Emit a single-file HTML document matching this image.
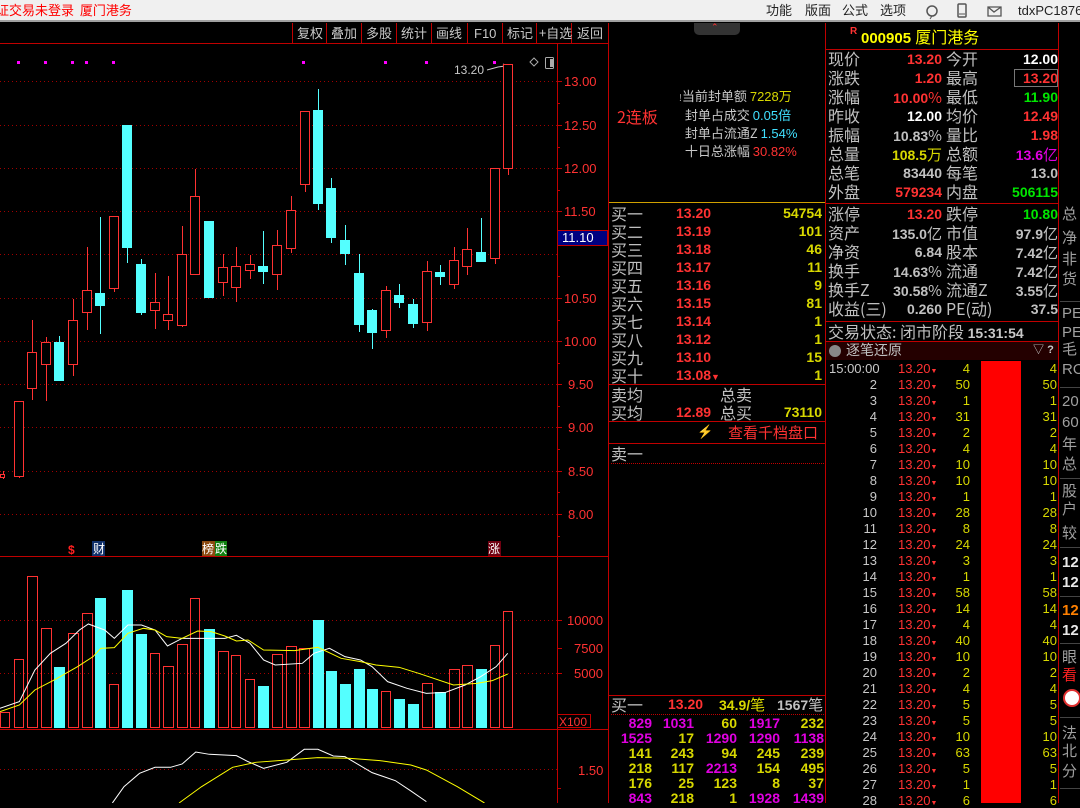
<!DOCTYPE html>
<html><head><meta charset="utf-8"><style>
*{margin:0;padding:0;box-sizing:border-box}
body{width:1080px;height:803px;background:#000;overflow:hidden;position:relative;font-family:"Liberation Sans","Noto Sans CJK SC",sans-serif}
.a{position:absolute;white-space:nowrap;line-height:1}
.cn{font-family:"Noto Sans CJK SC","WenQuanYi Zen Hei",sans-serif}
.n{font-family:"Liberation Sans",sans-serif;font-weight:bold;font-size:14px}
.l{font-size:16px;color:#c0c0c0}
.r{color:#ff3232}.y{color:#d8d800}.g{color:#00e600}.w{color:#fff}.m{color:#e000e0}.c{color:#40e0ff}.gr{color:#c0c0c0}
.hl{position:absolute;height:1px;background:#c00000}
.vl{position:absolute;width:1px;background:#c00000}
</style></head><body>
<!-- top bar -->
<div class="a" style="left:0;top:0;width:1080px;height:22px;background:#f0f0f0;border-bottom:2px solid #a0a0a0"></div>
<div class="a cn" style="left:-4px;top:3px;font-size:13px;color:#f00">证交易未登录&nbsp;&nbsp;厦门港务</div>
<div class="a cn" style="left:766px;top:3px;font-size:13px;color:#222;word-spacing:0">功能</div>
<div class="a cn" style="left:805px;top:3px;font-size:13px;color:#222">版面</div>
<div class="a cn" style="left:842px;top:3px;font-size:13px;color:#222">公式</div>
<div class="a cn" style="left:880px;top:3px;font-size:13px;color:#222">选项</div>
<svg class="a" style="left:922px;top:2px" width="80" height="18"><circle cx="10" cy="9" r="5" fill="none" stroke="#555" stroke-width="1.5"/><path d="M10 14 L8 17" stroke="#555"/><rect x="36" y="2" width="8" height="13" rx="1" fill="none" stroke="#555" stroke-width="1.5"/><line x1="37" y1="12" x2="43" y2="12" stroke="#555"/><path d="M66 5 H79 V14 H66 Z M66 5 L72 10 L79 5" fill="none" stroke="#555" stroke-width="1.3"/></svg>
<div class="a" style="left:1018px;top:4px;font-size:13px;color:#222">tdxPC1876</div>

<!-- left chart -->
<svg class="a" style="left:0;top:23px" width="609" height="780" viewBox="0 23 609 780">
<line x1="0" y1="43.5" x2="608" y2="43.5" stroke="#c00000"/>
<g stroke="#c00000"><line x1="292.5" y1="23" x2="292.5" y2="43"/><line x1="326.5" y1="23" x2="326.5" y2="43"/><line x1="361.5" y1="23" x2="361.5" y2="43"/><line x1="396.5" y1="23" x2="396.5" y2="43"/><line x1="431.5" y1="23" x2="431.5" y2="43"/><line x1="467.5" y1="23" x2="467.5" y2="43"/><line x1="502.5" y1="23" x2="502.5" y2="43"/><line x1="536.5" y1="23" x2="536.5" y2="43"/><line x1="571.5" y1="23" x2="571.5" y2="43"/></g>
<g font-family="Noto Sans CJK SC,sans-serif" font-size="13" fill="#c8c8c8">
<text x="297" y="38">复权</text><text x="331" y="38">叠加</text><text x="366" y="38">多股</text><text x="401" y="38">统计</text><text x="436" y="38">画线</text><text x="474" y="38" font-family="Liberation Sans">F10</text><text x="507" y="38">标记</text><text x="539" y="38">+自选</text><text x="577" y="38">返回</text></g>
<line x1="557.5" y1="44" x2="557.5" y2="803" stroke="#c00000"/>
<line x1="608.5" y1="23" x2="608.5" y2="803" stroke="#c00000"/>
<g stroke="#a00000" stroke-dasharray="1,3">
<line x1="0" y1="81.5" x2="557" y2="81.5"/><line x1="0" y1="125.5" x2="557" y2="125.5"/><line x1="0" y1="168.5" x2="557" y2="168.5"/><line x1="0" y1="211.5" x2="557" y2="211.5"/><line x1="0" y1="254.5" x2="557" y2="254.5"/><line x1="0" y1="298.5" x2="557" y2="298.5"/><line x1="0" y1="341.5" x2="557" y2="341.5"/><line x1="0" y1="384.5" x2="557" y2="384.5"/><line x1="0" y1="427.5" x2="557" y2="427.5"/><line x1="0" y1="471.5" x2="557" y2="471.5"/><line x1="0" y1="514.5" x2="557" y2="514.5"/>
<line x1="0" y1="620.5" x2="557" y2="620.5"/><line x1="0" y1="673.5" x2="557" y2="673.5"/><line x1="0" y1="769.5" x2="557" y2="769.5"/></g>
<g stroke="#c00000"><line x1="557" y1="81.5" x2="562" y2="81.5"/><line x1="557" y1="103.5" x2="560" y2="103.5"/><line x1="557" y1="125.5" x2="562" y2="125.5"/><line x1="557" y1="147.5" x2="560" y2="147.5"/><line x1="557" y1="168.5" x2="562" y2="168.5"/><line x1="557" y1="190.5" x2="560" y2="190.5"/><line x1="557" y1="211.5" x2="562" y2="211.5"/><line x1="557" y1="233.5" x2="560" y2="233.5"/><line x1="557" y1="276.5" x2="560" y2="276.5"/><line x1="557" y1="298.5" x2="562" y2="298.5"/><line x1="557" y1="320.5" x2="560" y2="320.5"/><line x1="557" y1="341.5" x2="562" y2="341.5"/><line x1="557" y1="363.5" x2="560" y2="363.5"/><line x1="557" y1="384.5" x2="562" y2="384.5"/><line x1="557" y1="406.5" x2="560" y2="406.5"/><line x1="557" y1="427.5" x2="562" y2="427.5"/><line x1="557" y1="449.5" x2="560" y2="449.5"/><line x1="557" y1="471.5" x2="562" y2="471.5"/><line x1="557" y1="492.5" x2="560" y2="492.5"/><line x1="557" y1="514.5" x2="562" y2="514.5"/><line x1="557" y1="536.5" x2="560" y2="536.5"/><line x1="557" y1="648.5" x2="562" y2="648.5"/><line x1="557" y1="620.5" x2="562" y2="620.5"/><line x1="557" y1="673.5" x2="562" y2="673.5"/><line x1="557" y1="788.5" x2="561" y2="788.5"/></g>
<g font-family="Liberation Sans" font-size="13" fill="#ff3232">
<text x="564" y="86">13.00</text><text x="564" y="130">12.50</text><text x="564" y="173">12.00</text><text x="564" y="216">11.50</text><text x="564" y="303">10.50</text><text x="564" y="346">10.00</text><text x="568" y="389">9.50</text><text x="568" y="432">9.00</text><text x="568" y="476">8.50</text><text x="568" y="519">8.00</text>
<text x="567" y="625">10000</text><text x="574" y="653">7500</text><text x="574" y="678">5000</text><text x="578" y="775">1.50</text></g>
<rect x="557.5" y="230.5" width="50" height="15" fill="#000080" stroke="#c00000"/>
<text x="562" y="242" font-family="Liberation Sans" font-size="13" fill="#fff">11.10</text>
<rect x="557.5" y="714.5" width="33" height="13" fill="none" stroke="#c00000"/>
<text x="559" y="726" font-family="Liberation Sans" font-size="12" fill="#ff3232">X100</text>
<line x1="0" y1="556.5" x2="608" y2="556.5" stroke="#c00000"/>
<line x1="0" y1="729.5" x2="608" y2="729.5" stroke="#c00000"/>
<g fill="#ff00ff"><rect x="17" y="61" width="3" height="3"/><rect x="44" y="61" width="3" height="3"/><rect x="71" y="61" width="3" height="3"/><rect x="85" y="61" width="3" height="3"/><rect x="112" y="61" width="3" height="3"/><rect x="302" y="61" width="3" height="3"/><rect x="384" y="61" width="3" height="3"/><rect x="425" y="61" width="3" height="3"/><rect x="493" y="61" width="3" height="3"/></g>
<text x="454" y="74" font-family="Liberation Sans" font-size="12" fill="#c8c8c8">13.20</text>
<path d="M487 70 L498 67 L505 66 M503 64 L507 66 L504 68" stroke="#c8c8c8" fill="none"/>
<path d="M530 62 L534 58 L538 62 L534 66 Z" stroke="#aaa" fill="none"/>
<rect x="545.5" y="57.5" width="8" height="11" rx="1" fill="none" stroke="#aaa"/><rect x="550" y="59" width="3" height="8" fill="#aaa"/>
<g id="cand"></g>
<text x="68" y="554" font-size="12" fill="#ff2020" font-family="Liberation Sans" font-weight="bold">$</text>
<rect x="92" y="541" width="13" height="15" fill="#10306a"/><text x="93" y="553" font-size="12" fill="#fff" font-family="Noto Sans CJK SC">财</text>
<rect x="202" y="541" width="13" height="15" fill="#8b4a10"/><text x="202" y="553" font-size="12" fill="#fff" font-family="Noto Sans CJK SC">榜</text>
<rect x="215" y="541" width="12" height="15" fill="#108010"/><text x="215" y="553" font-size="12" fill="#fff" font-family="Noto Sans CJK SC">跌</text>
<rect x="488" y="541" width="13" height="15" fill="#700010"/><text x="488" y="553" font-size="12" fill="#fff" font-family="Noto Sans CJK SC">涨</text>
<g id="vol"></g>
<g transform="translate(0,530) scale(0.3876,0.3333)" fill="none">
<polyline vector-effect="non-scaling-stroke" stroke="#fff" points="0,535 50,515 90,420 130,370 170,340 205,300 228,282 270,300 295,325 330,285 365,285 400,300 432,348 470,325 520,325 580,325 610,316 645,340 680,390 710,405 780,400 810,370 850,355 890,380 930,390 960,410 1000,455 1050,475 1100,490 1150,487 1200,465 1240,440 1280,410 1310,370"/>
<polyline vector-effect="non-scaling-stroke" stroke="#ffff00" points="0,545 50,525 90,480 140,450 200,410 240,380 260,355 295,353 330,310 370,295 400,300 430,320 470,325 510,303 545,305 580,318 610,333 640,330 680,360 760,362 820,352 880,385 930,395 970,405 1030,412 1080,430 1170,465 1230,460 1270,452 1310,432"/>
<polyline vector-effect="non-scaling-stroke" stroke="#fff" points="290,819 320,770 360,730 400,712 440,712 470,702 505,666 540,673 610,677 640,695 680,715 740,697 785,658 820,658 860,678 890,680 960,728 1020,752 1060,783 1100,815"/>
<polyline vector-effect="non-scaling-stroke" stroke="#ffff00" points="462,819 520,770 600,712 660,697 740,690 820,683 900,685 980,692 1060,705 1100,720 1180,770 1250,819"/>
</g>
</svg>
<script>
(function(){
var C=[["r",0,5,474,477,471,479],["r",14,24,401,476,401,478],["r",27,37,352,388,320,400],["r",41,51,342,364,337,401],["c",54,64,342,381,336,381],["r",68,78,320,364,299,376],["r",82,92,290,312,247,330],["c",95,105,293,306,217,334],["r",109,119,216,288,216,292],["c",122,132,125,248,125,263],["c",136,146,264,313,259,315],["r",150,160,302,310,273,329],["r",163,173,314,320,276,330],["r",177,187,254,325,226,327],["r",190,200,196,274,169,274],["c",204,214,221,298,221,298],["r",218,228,267,282,254,296],["r",231,241,266,287,247,302],["r",245,255,264,270,255,279],["c",258,268,266,272,231,284],["r",272,282,245,274,230,290],["r",286,296,210,248,196,253],["r",300,310,111,184,111,192],["c",313,323,110,204,89,210],["c",326,336,188,238,178,243],["c",340,350,240,254,225,265],["c",354,364,273,325,254,332],["c",367,377,310,333,309,349],["r",381,391,290,330,286,338],["c",394,404,295,303,284,308],["c",408,418,304,324,299,328],["r",422,432,271,322,261,331],["c",435,445,272,277,265,285],["r",449,459,260,284,247,289],["r",462,472,249,266,228,275],["c",476,486,252,262,218,262],["r",490,500,168,258,168,264],["r",503,513,64,168,64,175]];
var V=[[0,10,712],[14,24,659],[27,38,576],[41,52,628],[54,65,667],[68,79,633],[82,93,613],[95,106,598],[109,119,684],[122,133,590],[136,147,634],[150,160,653],[163,174,666],[177,188,644],[190,200,598],[204,215,629],[218,229,651],[231,241,655],[245,255,679],[258,269,686],[272,283,654],[286,297,646],[299,310,648],[313,324,620],[326,337,671],[340,351,684],[354,365,669],[367,378,689],[381,391,691],[394,405,699],[408,419,704],[422,433,683],[435,446,692],[449,460,669],[462,473,665],[476,487,669],[490,500,645],[503,513,611]];
var s="",v="";
C.forEach(function(d,i){var col=d[0]=="r"?"#ff3232":"#54ffff";var cx=Math.round((d[1]+d[2])/2)+0.5;
s+='<line x1="'+cx+'" y1="'+d[5]+'" x2="'+cx+'" y2="'+d[6]+'" stroke="'+col+'"/>';
if(d[0]=="r")s+='<rect x="'+(d[1]+0.5)+'" y="'+(d[3]+0.5)+'" width="'+(d[2]-d[1]-1)+'" height="'+Math.max(1,d[4]-d[3])+'" fill="#000" stroke="'+col+'"/>';
else s+='<rect x="'+d[1]+'" y="'+d[3]+'" width="'+(d[2]-d[1])+'" height="'+Math.max(1,d[4]-d[3])+'" fill="'+col+'"/>';
var q=V[i];
if(d[0]=="r")v+='<rect x="'+(q[0]+0.5)+'" y="'+(q[2]+0.5)+'" width="'+(q[1]-q[0]-1)+'" height="'+(727-q[2])+'" fill="none" stroke="#ff3232"/>';
else v+='<rect x="'+q[0]+'" y="'+q[2]+'" width="'+(q[1]-q[0])+'" height="'+(728-q[2])+'" fill="#54ffff"/>';});
document.getElementById("cand").innerHTML=s;document.getElementById("vol").innerHTML=v;
})();
</script>

<!-- middle pane -->
<div class="a" style="left:694px;top:23px;width:46px;height:12px;background:#333;border-radius:0 0 5px 5px"></div>
<div class="a" style="left:711px;top:23px;font-size:9px;color:#ff3232">⌃</div>
<div class="a cn r" style="left:617px;top:108px;font-size:16px">2连板</div>
<div class="a cn" style="left:679px;top:87px;font-size:13px;line-height:17px;color:#c8c8c8">
<span style="font-size:9px;color:#aaa">!</span>当前封单额 <span class="y" style="font-family:'Liberation Sans'">7228</span><span class="y">万</span><br>
&nbsp;&nbsp;封单占成交 <span class="c" style="font-family:'Liberation Sans'">0.05</span><span class="c">倍</span><br>
&nbsp;&nbsp;封单占流通Z <span class="c" style="font-family:'Liberation Sans'">1.54%</span><br>
&nbsp;&nbsp;十日总涨幅 <span class="r" style="font-family:'Liberation Sans'">30.82%</span></div>
<div class="hl" style="left:609px;top:202px;width:216px;background:#d0a000"></div>
<div id="book"></div>
<div class="hl" style="left:609px;top:384px;width:216px"></div>
<div class="a cn l" style="left:611px;top:386px">卖均</div><div class="a cn l" style="left:720px;top:386px">总卖</div>
<div class="a cn l" style="left:611px;top:404px">买均</div><div class="a n r" style="left:676px;top:405px">12.89</div><div class="a cn l" style="left:720px;top:404px">总买</div><div class="a n y" style="right:258px;top:405px">73110</div>
<div class="hl" style="left:609px;top:421px;width:216px"></div>
<div class="a" style="left:697px;top:425px;font-size:13px;color:#a08000">⚡</div>
<div class="a cn r" style="left:728px;top:425px;font-size:15px">查看千档盘口</div>
<div class="hl" style="left:609px;top:443px;width:216px"></div>
<div class="a cn l" style="left:611px;top:445px">卖一</div>
<div class="a" style="left:611px;top:463px;width:213px;border-top:1px dotted #c00000"></div>
<div class="hl" style="left:609px;top:695px;width:216px"></div>
<div class="a cn l" style="left:611px;top:696px">买一</div><div class="a n r" style="left:668px;top:697px">13.20</div><div class="a n y" style="left:719px;top:697px">34.9/<span class="cn" style="font-weight:normal;font-size:15px">笔</span></div><div class="a n gr" style="left:777px;top:697px">1567<span class="cn" style="font-weight:normal;font-size:15px">笔</span></div>
<div class="a" style="left:611px;top:714px;width:213px;border-top:1px dotted #c00000"></div>
<div id="grid"></div>

<div class="vl" style="left:825px;top:23px;height:780px"></div>
<!-- right pane -->
<div class="a" style="left:850px;top:27px;font-size:10px;font-weight:bold;color:#ff3232">R</div>
<div class="a" style="left:861px;top:28px;font-size:15px;font-weight:bold;color:#ffff00">000905 <span class="cn" style="font-weight:normal;font-size:16px">厦门港务</span></div>
<div class="hl" style="left:826px;top:49px;width:233px"></div>
<div id="info"></div>
<div class="a" style="left:1014px;top:69px;width:44px;height:18px;border:1px solid #777"></div>
<div class="hl" style="left:826px;top:203px;width:233px"></div>
<div class="hl" style="left:826px;top:321px;width:233px"></div>
<div class="a cn l" style="left:828px;top:323px">交易状态: 闭市阶段 <span class="n" style="font-family:'Liberation Sans';color:#c8c8c8">15:31:54</span></div>
<div class="hl" style="left:826px;top:341px;width:233px"></div>
<div class="a" style="left:826px;top:342px;width:232px;height:18px;background:#240000"></div>
<div class="a" style="left:829px;top:345px;width:12px;height:12px;border-radius:6px;background:#888"></div>
<div class="a cn l" style="left:846px;top:343px;font-size:14px">逐笔还原</div>
<div class="a" style="left:1033px;top:345px;font-size:11px;color:#ccc">▽ <b>?</b></div>
<div class="a" style="left:981px;top:361px;width:40px;height:442px;background:#ff0000"></div>
<div id="ticks"></div>
<div class="vl" style="left:1058px;top:23px;height:780px"></div>
<div id="far"></div>
<script>
(function(){
var h="";
var bl=["买一","买二","买三","买四","买五","买六","买七","买八","买九","买十"],bp=["13.20","13.19","13.18","13.17","13.16","13.15","13.14","13.12","13.10","13.08"],bv=["54754","101","46","11","9","81","1","1","15","1"];
for(var i=0;i<10;i++){var t=205+18*i;h+='<div class="a cn l" style="left:611px;top:'+t+'px">'+bl[i]+'</div><div class="a n r" style="left:676px;top:'+(t+1)+'px">'+bp[i]+(i==9?'<span style="font-size:9px">▼</span>':'')+'</div><div class="a n y" style="right:258px;top:'+(t+1)+'px">'+bv[i]+'</div>';}
document.getElementById("book").innerHTML=h;
var G=[["829m","1031m","60y","1917m","232y"],["1525m","17y","1290m","1290m","1138m"],["141y","243y","94y","245y","239y"],["218y","117y","2213m","154y","495y"],["176y","25y","123y","8y","37y"],["843m","218y","1y","1928m","1439m"]],R=[428,386,343,300,256];h="";
G.forEach(function(r,i){r.forEach(function(c,j){h+='<div class="a n '+c.slice(-1)+'" style="right:'+R[j]+'px;top:'+(716+15*i)+'px">'+c.slice(0,-1)+'</div>';});});
document.getElementById("grid").innerHTML=h;
var I=[["现价","13.20","r","今开","12.00","w"],["涨跌","1.20","r","最高","13.20","r"],["涨幅","10.00%","r","最低","11.90","g"],["昨收","12.00","w","均价","12.49","r"],["振幅","10.83%","gr","量比","1.98","r"],["总量","108.5万","y","总额","13.6亿","m"],["总笔","83440","gr","每笔","13.0","gr"],["外盘","579234","r","内盘","506115","g"],[],["涨停","13.20","r","跌停","10.80","g"],["资产","135.0亿","gr","市值","97.9亿","gr"],["净资","6.84","gr","股本","7.42亿","gr"],["换手","14.63%","gr","流通","7.42亿","gr"],["换手Z","30.58%","gr","流通Z","3.55亿","gr"],["收益(三)","0.260","gr","PE(动)","37.5","gr"]];h="";
I.forEach(function(r,i){if(!r.length)return;var t=i<8?50+19*i:205+19*(i-9);
function v(s){return s.replace(/([万亿%])/,'<span class="cn" style="font-weight:normal;font-size:15px">$1</span>');}
h+='<div class="a cn l" style="left:828px;top:'+t+'px">'+r[0]+'</div><div class="a n '+r[2]+'" style="right:138px;top:'+(t+2)+'px">'+v(r[1])+'</div><div class="a cn l" style="left:946px;top:'+t+'px">'+r[3]+'</div><div class="a n '+r[5]+'" style="right:22px;top:'+(t+2)+'px">'+v(r[4])+'</div>';});
document.getElementById("info").innerHTML=h;
var T=[4,50,1,31,2,4,10,10,1,28,8,24,3,1,58,14,4,40,10,2,4,5,5,10,63,5,1,6];h="";
T.forEach(function(q,i){var t=362+16*i;h+='<div class="a" style="'+(i==0?'left:829px':'right:203px')+';top:'+t+'px;font-size:13px;color:#c8c8c8">'+(i==0?'15:00:00':(i+1))+'</div><div class="a" style="left:898px;top:'+t+'px;font-size:13px;color:#ff3232">13.20<span style="font-size:7px">▼</span></div><div class="a y" style="right:110px;top:'+t+'px;font-size:13px">'+q+'</div><div class="a y" style="right:23px;top:'+t+'px;font-size:13px">'+q+'</div>';});
document.getElementById("ticks").innerHTML=h;
var F=[["总",215],["净",239],["非",260],["货",280],["-",301],["PE",314],["PE",333],["毛",350],["RO",370],["-",387],["20",402],["60",423],["年",445],["总",465],["-",478],["股",492],["户",510],["较",534],["-",547],["12w",563],["12w",583],["-",596],["12o",611],["12w",631],["-",643],["眼",658],["看r",676],["-",717],["法",734],["北",752],["分",772],["-",788]];h="";
F.forEach(function(f){if(f[0]=="-"){h+='<div class="a" style="left:1060px;top:'+f[1]+'px;width:20px;height:1px;background:#444"></div>';return;}
var s=f[0],c="#a0a0a0",w="normal";if(/[wor]$/.test(s)){var k=s.slice(-1);s=s.slice(0,-1);c=k=="w"?"#e8e8e8":k=="o"?"#ff8000":"#ff2020";if(k!="r")w="bold";}
h+='<div class="a" style="left:1062px;top:'+(f[1]-8)+'px;font-size:15px;font-weight:'+w+';color:'+c+';font-family:Liberation Sans,Noto Sans CJK SC,sans-serif">'+s+'</div>';});
h+='<div class="a" style="left:1063px;top:689px;width:18px;height:18px;border-radius:9px;background:#fff;border:2px solid #e03030"></div>';
document.getElementById("far").innerHTML=h;
})();
</script>
</body></html>
